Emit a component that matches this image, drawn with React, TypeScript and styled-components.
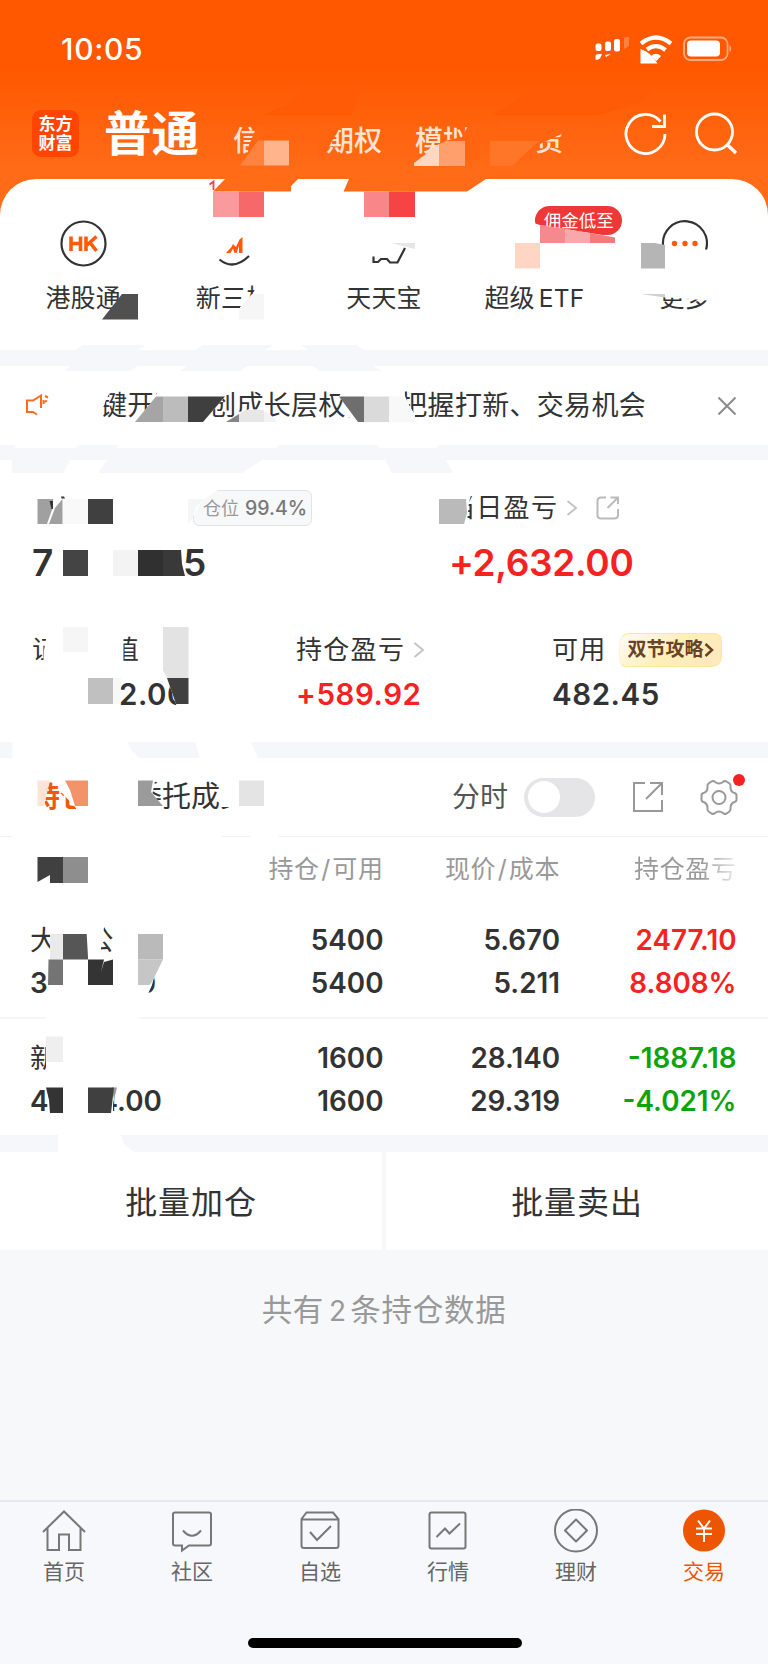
import React from "react";
import styled, { createGlobalStyle } from "styled-components";

const Global = createGlobalStyle`
  * { box-sizing: border-box; }
  body { margin: 0; background: #f7f8fa; }
`;

const Page = styled.div`
  position: relative;
  width: 768px;
  height: 1664px;
  overflow: hidden;
  display: flex;
  flex-direction: column;
  background: linear-gradient(#ff5800 0, #ff5800 70px, #ff6b17 170px, #ff6b17 240px, #f7f8fa 240px);
  font-family: Inter, "Noto Sans CJK SC", sans-serif;
  color: #333;
  white-space: nowrap;
`;

const Row = styled.div`
  display: flex;
  align-items: center;
`;

const Space = styled.span<{ $w: number }>`
  flex: none;
  width: ${(p) => p.$w}px;
`;

const StatusBar = styled(Row)`
  height: 98px;
  padding: 0 35px 0 61px;
  justify-content: space-between;
  color: #fff;
`;

const Clock = styled.span`
  font-size: 30px;
  font-weight: 500;
  line-height: 36px;
  letter-spacing: 0.7px;
`;

const NavBar = styled(Row)`
  height: 71px;
  padding: 0 30px 0 32px;
  color: #fff;
`;

const Logo = styled.div`
  width: 47px;
  height: 47px;
  border-radius: 9px;
  background: #ff4500;
  font-size: 17px;
  font-weight: 700;
  line-height: 19px;
  padding-top: 5px;
  text-align: center;
`;

const NavTitle = styled.span`
  margin-left: 25px;
  width: 129px;
  font-size: 47.5px;
  line-height: 56px;
  font-weight: 700;
`;

const NavTab = styled.span<{ $w: number }>`
  width: ${(p) => p.$w}px;
  font-size: 28px;
  line-height: 36px;
  padding-top: 14px;
  font-weight: 500;
  color: #ffe3d4;
`;

const NavIcons = styled(Row)`
  margin-left: auto;
  gap: 26px;
`;

const QuickCard = styled.div`
  margin-top: 10px;
  height: 171px;
  padding: 0 8px;
  background: #fff;
  border-radius: 36px 36px 0 0;
  display: grid;
  grid-template-columns: repeat(5, 1fr);
`;

const QuickItem = styled.div`
  position: relative;
  display: flex;
  flex-direction: column;
  align-items: center;
  padding-top: 41px;
`;

const QuickLabel = styled.span`
  margin-top: 15px;
  font-size: 25px;
  line-height: 32px;
  letter-spacing: 0.2px;
`;

const Ticker = styled.span`
  margin-left: 4px;
  font-size: 24.5px;
`;

const Promo = styled.span`
  position: absolute;
  left: 76px;
  top: 27px;
  width: 87px;
  height: 29px;
  border-radius: 14.5px;
  background: #ee3838;
  color: #fff;
  font-size: 17.5px;
  line-height: 30px;
  text-align: center;
`;

const Band = styled.div<{ $h: number }>`
  height: ${(p) => p.$h}px;
  background: #f6f7fa;
`;

const Notice = styled(Row)`
  height: 79px;
  padding: 0 32px 0 25px;
  background: #fff;
`;

const NoticeText = styled.span`
  margin-left: 25px;
  flex: 1;
  font-size: 27px;
  line-height: 36px;
  letter-spacing: 0.3px;
`;

const Account = styled.div`
  height: 282px;
  padding: 30px 0 0 32px;
  background: #fff;
`;

const AccountRow = styled.div<{ $cols: string }>`
  display: grid;
  grid-template-columns: ${(p) => p.$cols};
`;

const Label = styled(Row)`
  height: 36px;
  font-size: 26px;
  line-height: 38px;
  letter-spacing: 1.3px;
`;

const Amount = styled(Row)<{ $big?: boolean; $color?: string }>`
  height: 40px;
  margin-top: ${(p) => (p.$big ? 17 : 6)}px;
  margin-bottom: ${(p) => (p.$big ? 49 : 0)}px;
  font-size: ${(p) => (p.$big ? 37 : 29.5)}px;
  letter-spacing: ${(p) => (p.$big ? -0.35 : 0.55)}px;
  line-height: 40px;
  font-weight: 600;
  color: ${(p) => p.$color || "#333"};
`;

const RatioTag = styled.span`
  width: 119px;
  height: 36px;
  border: 1.5px solid #e2e3e8;
  border-radius: 6px;
  background: #f7f8fa;
  color: #999;
  font-size: 18px;
  line-height: 34px;
  letter-spacing: 0;
  padding-left: 9px;
  b {
    margin-left: 6px;
    font-weight: 500;
    font-size: 19.5px;
    color: #777;
  }
`;

const GuideTag = styled.span`
  width: 103px;
  height: 34px;
  margin-left: 12px;
  border-radius: 10px 7px 10px 7px;
  border: 1.5px solid #fde79a;
  border-left-color: #fdf3dc;
  background: linear-gradient(135deg, #fffaf0 5%, #ffefb8 50%, #fde8bd);
  color: #6a4227;
  font-size: 19px;
  line-height: 32px;
  font-weight: 700;
  letter-spacing: 0;
  display: flex;
  align-items: center;
  padding-left: 8px;
`;

const TabsBar = styled(Row)`
  height: 79px;
  padding-left: 32px;
  background: #fff;
  border-bottom: 1.5px solid #f0f0f2;
  font-size: 29px;
  line-height: 38px;
`;

const ActiveTab = styled.span`
  width: 101px;
  color: #ee5a0c;
  font-weight: 700;
  font-size: 28px;
`;

const PlainTab = styled.span`
  width: 319px;
`;

const Timeline = styled.span`
  color: #555;
  font-size: 28px;
`;

const Switch = styled.span`
  width: 71px;
  height: 39px;
  margin: 0 38px 0 16px;
  border-radius: 20px;
  background: #e5e5e8;
  padding: 3.5px 4px;
  &::after {
    content: "";
    display: block;
    width: 32px;
    height: 32px;
    border-radius: 50%;
    background: #fff;
  }
`;

const Table = styled.div`
  height: 298px;
  background: #fff;
`;

const TableGrid = styled.div`
  display: grid;
  grid-template-columns: 353.5px 176.5px 176.5px;
  padding-left: 30px;
`;

const HeadRow = styled(TableGrid)`
  height: 65px;
  line-height: 65px;
  font-size: 25px;
  letter-spacing: 0.6px;
  color: #999;
  text-align: right;
`;

const HeadSlash = styled.span`
  margin: 0 1.5px;
`;

const FadeHead = styled.span`
  background: linear-gradient(90deg, #999 80%, #eee 100%);
  -webkit-background-clip: text;
  color: transparent;
`;

const Holding = styled(TableGrid)<{ $h: number; $pt: number; $line?: boolean }>`
  height: ${(p) => p.$h}px;
  padding-top: ${(p) => p.$pt}px;
  border-bottom: ${(p) => (p.$line ? "2px solid #f6f6f8" : "none")};
`;

const HoldCells = styled.div`
  display: flex;
  justify-content: space-between;
`;

const Cell = styled.div<{ $color?: string }>`
  font-size: 27.8px;
  font-weight: 600;
  line-height: 42.5px;
  text-align: right;
  color: ${(p) => p.$color || "#333"};
`;

const NameCell = styled(Cell)`
  text-align: left;
`;

const NameLine = styled(Row)<{ $cjk?: boolean }>`
  height: 42.5px;
  font-weight: ${(p) => (p.$cjk ? 400 : 600)};
`;

const Actions = styled.div`
  display: grid;
  grid-template-columns: 1fr 1fr;
  gap: 4px;
  height: 98px;
`;

const Action = styled.button`
  border: 0;
  padding: 3px 0 0;
  background: #fff;
  font: 400 32px/95px Inter, "Noto Sans CJK SC", sans-serif;
  letter-spacing: 0.9px;
  color: #333;
`;

const Summary = styled.div`
  height: 250px;
  padding-top: 40px;
  text-align: center;
  font-size: 30.5px;
  line-height: 40px;
  letter-spacing: 0.7px;
  color: #999;
`;

const Count = styled.span`
  margin: 0 3.5px 0 5px;
  font-size: 28px;
`;

const TabBar = styled.nav`
  height: 164px;
  border-top: 2px solid #e8e8ee;
  display: grid;
  grid-template-columns: repeat(6, 128px);
  background: #f7f8fb;
`;

const TabItem = styled.div<{ $on?: boolean }>`
  display: flex;
  flex-direction: column;
  align-items: center;
  padding-top: 7px;
  font-size: 21px;
  line-height: 28px;
  color: ${(p) => (p.$on ? "#ee5500" : "#666")};
  svg { margin-bottom: 5px; }
`;

const HomeIndicator = styled.div`
  position: absolute;
  left: 248px;
  top: 1638px;
  width: 274px;
  height: 10px;
  border-radius: 5px;
  background: #000;
`;

const Overlay = styled.svg`
  position: absolute;
  left: 0;
  top: 0;
  pointer-events: none;
`;

const Chevron = () => (
  <svg width="12" height="18" viewBox="0 0 12 18" fill="none" stroke="#c4c4c4" strokeWidth="2">
    <path d="M1.5 2 L10 9 L1.5 16" />
  </svg>
);

/* Mosaic tiles and smudges: [points, fill] */
const W = "#fff";
const smudges: [string, string][] = [
  ["262,115 290,104 304,88 361,88 352,115", "#ff5a05"],
  ["492,115 520,98 545,88 655,88 638,103 600,115", "#ff5a05"],
  // header tabs
  ["257,126 263,126 263,158 247,158 249,145", "#ff6611"],
  ["240,165.5 258,140.5 264,140.5 264,165.5", "#ff833f"],
  ["264,140.5 289,140.5 289,165.5 264,165.5", "#ffb48c"],
  ["318,124 342,124 334,138 324,155 318,158", "#ff6410"],
  ["440,142 462,137 469,124 480,124 480,160 440,160", "#ff6410"],
  ["414,166 414,163 439,144 439,166", "#ffd8c4"],
  ["439,144 446,141 465,141 465,166 439,166", "#ffa06c"],
  ["500,124 566,124 566,132 540,144 526,155 526,160 500,160", "#ff6410"],
  ["490,141 539,141 512,166 490,166", "#ff7629"],
  // card top
  ["213,191.5 225,179 298,179 291,186 291,191.5", "#ff6b17"],
  ["343.5,191.5 349,179 486,179 467,191.5", "#ff6b17"],
  ["213,191.5 239,191.5 239,217 213,217", "#fb9a9c"],
  ["239,191.5 264,191.5 264,217 239,217", "#f7686a"],
  ["364,191.5 389,191.5 389,217 364,217", "#f98688"],
  ["389,191.5 415,191.5 415,217 389,217", "#f54346"],
  // quick entries
  ["102,319.5 122,294 138,294 138,319.5", "#505050"],
  ["240,314 240,307 251,297 258,284 272,284 272,314", W],
  ["239,319.5 239,309 252,294 264,294 264,319.5", "#f6f6f6"],
  ["391,243 415,243 415,249", "#e6e6e6"],
  ["532,222.5 540,225 568,229.5 615,237 625,237 625,243 532,243", W],
  ["540,225 565,229 565,243 540,243", "#f48a8e"],
  ["565,229 590,233 590,243 565,243", "#f6a8aa"],
  ["590,233 604,235.5 615,237.5 615,243 590,243", "#f47a7c"],
  ["515,243 540,243 540,268.5 515,268.5", "#ffd6c4"],
  ["641,243 655,243 665,245 665,268.5 641,268.5", "#b5b5b5"],
  ["640,282 712,282 712,301 690,299 662,297", W],
  ["641,294 665,294 665,297.5", "#d0d0d0"],
  // first band
  ["75,350 83,345 146,345 138,350", "#f6f7fa"],
  ["195,350 203,345 274,345 265,350", "#f6f7fa"],
  ["301,345 356,345 364,350 308,350", "#f6f7fa"],
  ["70,366 65,371 130,371 137,366", "#f6f7fa"],
  ["187,366 180,371 240,371 247,366", "#f6f7fa"],
  ["313,366 320,371 382,371 373,366", "#f6f7fa"],
  // notice
  ["98,388 112,388 106,400 103,408 98,410", W],
  ["135,422 156,397 158,390 225,390 225,397 203,422", W],
  ["135,422 156,396.5 163,396.5 163,422", "#a5a5a5"],
  ["163,396.5 188,396.5 188,422 163,422", "#bcbcbc"],
  ["188,396.5 225,396.5 203,422 188,422", "#3f3f3f"],
  ["226,422 239,412 250,409 264,410 277,422", W],
  ["226,422 239,414 239,422", "#858585"],
  ["239,414 246,410 264,410 264,422 239,422", "#e7e7e7"],
  ["264,411 270,414 277,422 264,422", "#f3f3f3"],
  ["339,396.5 344,388 404,388 405,396 409,405 415,415 415,422 358,422 353,414 352,417 346,417 346,405", W],
  ["339,396.5 364,396.5 364,422 358,422", "#6e6e6e"],
  ["364,396.5 389,396.5 389,422 364,422", "#dadada"],
  ["389,396.5 404,396.5 415,416 415,422 389,422", "#f8f8f8"],
  // second band
  ["17,445 79,445 75,448 14,448", W],
  ["118,445 278,445 276,448 116,448", W],
  ["376,445 438,445 436,448 380,448", W],
  ["12,460 70,460 63,473 12,473", "#f6f7fa"],
  ["107,460 262,460 242,473 98,473", "#f6f7fa"],
  ["385,460 446,460 453,473 392,473", "#f6f7fa"],
  // totals
  ["37.5,499 53,499 53,507 47,524 37.5,524", "#a0a0a0"],
  ["62.5,499 62.5,524 49,524 55,508", "#a0a0a0"],
  ["61,496.500 64,496.500 65,498.500 61.500,498.500", "#333"],
  ["49.500,501 53,501 53,509 51.500,509", "#333"],
  ["63,499 88,499 88,524 63,524", "#f9f9f9"],
  ["88,499 113,499 113,524 88,524", "#404040"],
  ["188,488 221,488 203,500 192,518 188,524", W],
  ["188,499 204,499 196,507 192,519 188,524", "#f5f6f8"],
  ["63,550 88,550 88,576 63,576", "#444"],
  ["113,550 138,550 138,576 113,576", "#f3f3f3"],
  ["138,550 163,550 163,576 138,576", "#303030"],
  ["163,550 181,550 182,564 185,576 163,576", "#393939"],
  ["445,492 472,492 469,502 467,524 445,524", W],
  ["439,499 466,499 467,513 464,524 439,524", "#bababa"],
  ["47,634 62,634 62,668 43,668 44,650", W],
  ["63,627 88,627 88,652 63,652", "#f6f6f6"],
  ["110,634 123.5,634 123.5,668 110,668", W],
  ["163,627 188.5,627 188.5,678 167,678 163,670", "#e3e3e3"],
  ["88,678 113,678 113,704 88,704", "#c0c0c0"],
  ["113,678 121,678 120,704 113,704", "#f8f8f8"],
  ["167,678 188.5,678 188.5,708 177,708 176,704", W],
  ["167,678 188.5,678 188.5,704 176,704", "#404040"],
  // third band
  ["12.5,742 127,742 131,750 139,758 12.5,758", W],
  ["195,742 251,742 258,758 200,758", W],
  // tabs
  ["30,776 50,776 44,806 44,815 30,815", W],
  ["37.5,780.5 50,780.5 44,806 37.5,806", "#fce4d8"],
  ["59,776 90,776 90,815 76,815 76,808 63,794 59,790", W],
  ["65,780.5 88,780.5 88,806 75,806 70,790", "#f2936a"],
  ["130,776 156,776 152,796 163,806 156,815 130,815", W],
  ["138,780.5 153,780.5 151,792 163,806 138,806", "#9b9b9b"],
  ["216,776 221,783 221,807 230,807 231,815 260,815 260,776", W],
  ["239,780.5 264,780.5 264,806 239,806", "#e4e4e4"],
  ["12.5,834 222,834 222,839 12.5,839", W],
  ["250,834 279,834 279,839 250,839", W],
  ["37.5,857 63,857 63,883 50,883 50,875 37.5,882", "#404040"],
  ["63,857 88,857 88,883 63,883", "#8e8e8e"],
  // first holding
  ["50,922 60,922 60,957 50,957", W],
  ["50,934 63,934 63,959.5 50,959.5", "#eaeaea"],
  ["63,934 88,934 88,959.5 63,959.5", "#565656"],
  ["86,922 105,922 101,945 101,957 88,957", W],
  ["48.5,959.5 63,959.5 63,985 48,985", "#747474"],
  ["88,959.5 104,959.5 101,972 104,962 113,959.5 113,985 88,985", "#343434"],
  ["138,934 163,934 163,959.5 138,959.5", "#bababa"],
  ["136,970 156,970 152,985 148,994 136,996", W],
  ["138,959.5 163,959.5 153,980 150,985 138,985", "#c6c6c6"],
  ["46,1015 139,1015 139,1021 46,1021", W],
  // second holding
  ["46,1040 60,1040 60,1075 46,1075", W],
  ["46,1036.5 63,1036.5 63,1062 46,1062", "#efefef"],
  ["46,1087.5 63,1087.5 63,1113 50,1113 49,1100", "#343434"],
  ["96,1084 117,1084 113,1104 113,1115 96,1115", W],
  ["112,1087.5 117,1087.5 114,1100", "#999"],
  ["88,1087.5 114,1087.5 111,1113 88,1113", "#404040"],
  ["58,1135 121,1135 124,1144 134,1152 58,1152", W],
];

const tabs = [
  { t: "首页", d: <path d="M1 22 L22 1.5 L43 22 M5.5 18 V40 H17 V24.5 H27 V40 H38.5 V18" /> },
  { t: "社区", d: <path d="M5 2.5 H39 Q41 2.5 41 4.5 V33 Q41 35.5 39 35.5 H19 L12 40.500 V35.5 H5 Q3 35.500 3 33.500 V4.500 Q3 2.5 5 2.5 Z M13 20.5 Q22 31 31 20.5" /> },
  { t: "自选", d: <path d="M3.500 9 L8.500 2.5 H35 L40.500 9 V35.500 Q40.5 38 38 38 H6 Q3.5 38 3.5 35.5 Z M3.500 9.500 H40.500 M12 22 L19 30 L33 16" /> },
  { t: "行情", d: <><rect x="3.500" y="2.500" width="36" height="36" rx="2" /><path d="M10.500 27 L19 18.500 L23.500 23.500 L34 13.500" /></> },
  { t: "理财", d: <><circle cx="22" cy="20.500" r="21" /><path d="M22 9.500 L33 20.500 L22 31.500 L11 20.500 Z" strokeLinejoin="round" /></> },
  { t: "交易", on: true, d: <><circle cx="22" cy="20.500" r="21" fill="#ee5500" stroke="none" /><path d="M16 10.500 L22 18.500 L28 10.500 M14 18.500 H30 M14 24 H30 M22 18.500 V32" stroke="#fff" /></> },
];

export default function App() {
  return (
    <Page>
      <Global />
      <StatusBar>
        <Clock>10:05</Clock>
        <svg width="138" height="30" viewBox="595 34 138 30">
          <g fill="#fff">
            <rect x="595.500" y="43.500" width="6" height="7.500" rx="2" />
            <rect x="605" y="41.500" width="6" height="9.500" rx="2" />
            <rect x="614" y="39" width="6" height="12.500" rx="2" />
            <path d="M595.5 55.500 Q596 54 599 54 H602 L600 58.500 Q596 61 595.5 59 Z M605 55 L611 54 L606 57 Z" />
            <path d="M624 38 Q626 36.500 629 37 V46 L624 49 Z" opacity=".25" />
            <path d="M640.500 49 L646 51.500 Q652 55 657.500 63.500 H640.500 Z" />
            <path d="M651 56 Q656 51.500 661 56 L656.500 61 Z" />
          </g>
          <g fill="none" stroke="#fff" strokeWidth="4.200">
            <path d="M641 43.500 Q656 31.500 671 43.500" />
            <path d="M647 49.500 Q656 42.500 665.500 50" />
          </g>
          <rect x="684" y="37.500" width="43.500" height="22.500" rx="6.500" fill="none" stroke="#fff" strokeWidth="1.800" opacity=".5" />
          <rect x="687" y="40.500" width="33" height="16" rx="4" fill="#fff" />
          <path d="M729.500 45 Q733 48.500 729.500 52.500 Z" fill="#fff" opacity=".5" />
        </svg>
      </StatusBar>
      <NavBar>
        <Logo>东方<br />财富</Logo>
        <NavTitle>普通</NavTitle>
        <NavTab $w={93}>信</NavTab>
        <NavTab $w={89}>期权</NavTab>
        <NavTab $w={120}>模拟</NavTab>
        <NavTab $w={28}>货</NavTab>
        <NavIcons>
          <svg width="44" height="44" viewBox="623 112 44 44" fill="none" stroke="#fff" strokeWidth="2.800">
            <path d="M664 134 A19.500 19.500 0 1 1 659.500 121.500 M663.500 114.500 V126.500 H651" />
          </svg>
          <svg width="44" height="44" viewBox="692 112 44 44" fill="none" stroke="#fff" strokeWidth="2.800">
            <circle cx="712.500" cy="132" r="18" />
            <path d="M725 144.500 L734 153" strokeWidth="3.500" />
          </svg>
        </NavIcons>
      </NavBar>

      <QuickCard>
        <QuickItem>
          <svg width="47" height="47" viewBox="0 0 47 47" fill="none">
            <circle cx="23.500" cy="23.500" r="22" stroke="#333" strokeWidth="2.200" />
            <path d="M11 16.500 V31 M20.500 16.500 V31 M11 23.500 H20.500 M26 16.500 V31 M36.500 16.500 L27 25 M30 22.500 L36.500 31" stroke="#ff5a0a" strokeWidth="3.600" />
          </svg>
          <QuickLabel>港股通</QuickLabel>
        </QuickItem>
        <QuickItem>
          <svg width="47" height="47" viewBox="0 0 47 47" fill="none">
            <path d="M9.500 39.500 Q23.500 51 39 36" stroke="#333" strokeWidth="2.200" />
            <path d="M16 33 L21.500 27 L23 24 L26 27 L29.500 19.500 L32.500 17 V33 H29 V26 L26.500 33 H24.500 L23 28.500 L20.500 33 Z" fill="#ff5a0a" />
          </svg>
          <QuickLabel>新三板</QuickLabel>
        </QuickItem>
        <QuickItem>
          <svg width="47" height="47" viewBox="0 0 47 47" fill="none" stroke="#333" strokeWidth="2.200">
            <path d="M13.500 36.500 V42 H18 L21 39 H27 L30 42.500 H37.500 L45 28" />
          </svg>
          <QuickLabel>天天宝</QuickLabel>
        </QuickItem>
        <QuickItem>
          <svg width="47" height="47" />
          <QuickLabel>超级<Ticker>ETF</Ticker></QuickLabel>
          <Promo>佣金低至</Promo>
        </QuickItem>
        <QuickItem>
          <svg width="47" height="47" viewBox="0 0 47 47" fill="#ff5a0a">
            <path d="M2 25 A22 22 0 1 1 45 29.500" fill="none" stroke="#333" strokeWidth="2.200" />
            <circle cx="13.500" cy="23.500" r="2.700" /><circle cx="24" cy="23.500" r="2.700" /><circle cx="34" cy="23.500" r="2.700" />
          </svg>
          <QuickLabel>更多</QuickLabel>
        </QuickItem>
      </QuickCard>
      <Band $h={16} />

      <Notice>
        <svg width="50" height="26" viewBox="25 392 50 26" fill="none" stroke="#ff6a1c" strokeWidth="2">
          <path d="M37 413.500 L33 411 H27 V399.500 H33 L41 394.500 V407 M43.500 399 V403 M45 395 L48 396.500 M44.500 401 L47 399.500" />
        </svg>
        <NoticeText>键开通科创成长层权限，把握打新、交易机会</NoticeText>
        <svg width="18" height="18" viewBox="0 0 18 18" stroke="#8c8c8c" strokeWidth="2">
          <path d="M0.500 0.500 L17.500 17.500 M17.500 0.500 L0.500 17.500" />
        </svg>
      </Notice>
      <Band $h={15} />

      <Account>
        <AccountRow $cols="417px 1fr">
          <div>
            <Label><Space $w={161} /><RatioTag>仓位<b>99.4%</b></RatioTag></Label>
            <Amount $big>7<Space $w={130} />5</Amount>
          </div>
          <div>
            <Label>
              当日盈亏<Space $w={7.5} /><Chevron /><Space $w={18} />
              <svg width="24" height="24" viewBox="0 0 24 24" fill="none" stroke="#bbb" strokeWidth="2">
                <path d="M10 1.500 H5 Q1.500 1.500 1.500 5 V19 Q1.500 22.500 5 22.500 H18 Q22 22.500 22 19 V13 M14.500 1.500 H22 V8 M22 1.500 L11.500 12" />
              </svg>
            </Label>
            <Amount $big $color="#f52222">+2,632.00</Amount>
          </div>
        </AccountRow>
        <AccountRow $cols="264px 256px 1fr">
          <div>
            <Label>证<Space $w={53.5} />值</Label>
            <Amount><Space $w={87} />2.00</Amount>
          </div>
          <div>
            <Label>持仓盈亏<Space $w={7.5} /><Chevron /></Label>
            <Amount $color="#f52222">+589.92</Amount>
          </div>
          <div>
            <Label>可用
              <GuideTag>
                双节攻略
                <svg width="10" height="14" viewBox="0 0 10 14" fill="none" stroke="#6a4227" strokeWidth="2.500"><path d="M1.500 1 L8 7 L1.500 13" /></svg>
              </GuideTag>
            </Label>
            <Amount>482.45</Amount>
          </div>
        </AccountRow>
      </Account>
      <Band $h={16} />

      <TabsBar>
        <ActiveTab>持仓</ActiveTab>
        <PlainTab>委托成交</PlainTab>
        <Timeline>分时</Timeline>
        <Switch />
        <svg width="30" height="30" viewBox="0 0 30 30" fill="none" stroke="#999" strokeWidth="2">
          <path d="M12 1 H1 V29 H29 V18 M17 1 H29 V13 M29 1 L13 17" />
        </svg>
        <Space $w={37} />
        <svg width="50" height="50" viewBox="700 772 50 50" fill="none" stroke="#999" strokeWidth="2">
          <path d="M711.500 781.500 Q713.500 780.500 715 782 Q719 785 723 782 Q724.500 780.500 726.500 781.500 L729.500 783.500 Q731 784.500 730.500 787 Q730.500 792 734.500 793 Q736.500 793.500 736.500 795.500 V799.500 Q736.500 801.500 734.500 802 Q730.500 803.500 730.500 808 Q731 810.500 729.500 811.500 L726.500 813.500 Q724.500 814.500 723 813 Q719 810 715 813 Q713.500 814.500 711.500 813.500 L708.500 811.500 Q707 810.500 707.500 808 Q707.500 803.500 703.500 802 Q701.500 801.500 701.500 799.500 V795.500 Q701.500 793.500 703.500 793 Q707.500 792 707.500 787 Q707 784.500 708.500 783.500 Z" />
          <circle cx="719" cy="797.500" r="6.500" />
          <circle cx="739" cy="780" r="6" fill="#f52222" stroke="none" />
        </svg>
      </TabsBar>

      <Table>
        <HeadRow>
          <span>持仓<HeadSlash>/</HeadSlash>可用</span>
          <span>现价<HeadSlash>/</HeadSlash>成本</span>
          <FadeHead>持仓盈亏</FadeHead>
        </HeadRow>
        <Holding $h={117} $pt={17} $line>
          <HoldCells>
            <NameCell>
              <NameLine $cjk>大<Space $w={28} />公</NameLine>
              <NameLine>3<Space $w={90} />0</NameLine>
            </NameCell>
            <Cell>5400<br />5400</Cell>
          </HoldCells>
          <Cell>5.670<br />5.211</Cell>
          <Cell $color="#f52222">2477.10<br />8.808%</Cell>
        </Holding>
        <Holding $h={116} $pt={18}>
          <HoldCells>
            <NameCell>
              <NameLine $cjk>新</NameLine>
              <NameLine>4<Space $w={51} />4.00</NameLine>
            </NameCell>
            <Cell>1600<br />1600</Cell>
          </HoldCells>
          <Cell>28.140<br />29.319</Cell>
          <Cell $color="#0ba40b">-1887.18<br />-4.021%</Cell>
        </Holding>
      </Table>
      <Band $h={17} />

      <Actions>
        <Action>批量加仓</Action>
        <Action>批量卖出</Action>
      </Actions>
      <Summary>共有<Count>2</Count>条持仓数据</Summary>

      <TabBar>
        {tabs.map((x) => (
          <TabItem key={x.t} $on={x.on}>
            <svg width="46" height="44" viewBox="-1 -1 46 44" fill="none" stroke="#777" strokeWidth="2">{x.d}</svg>
            {x.t}
          </TabItem>
        ))}
      </TabBar>
      <HomeIndicator />

      <Overlay width="768" height="1664" viewBox="0 0 768 1664">
        {smudges.map(([points, fill], i) => (
          <polygon key={i} points={points} fill={fill} />
        ))}
        <path d="M209.500 184.500 L213.500 181.500 V190" fill="none" stroke="#f04050" strokeWidth="1.800" />
      </Overlay>
    </Page>
  );
}
